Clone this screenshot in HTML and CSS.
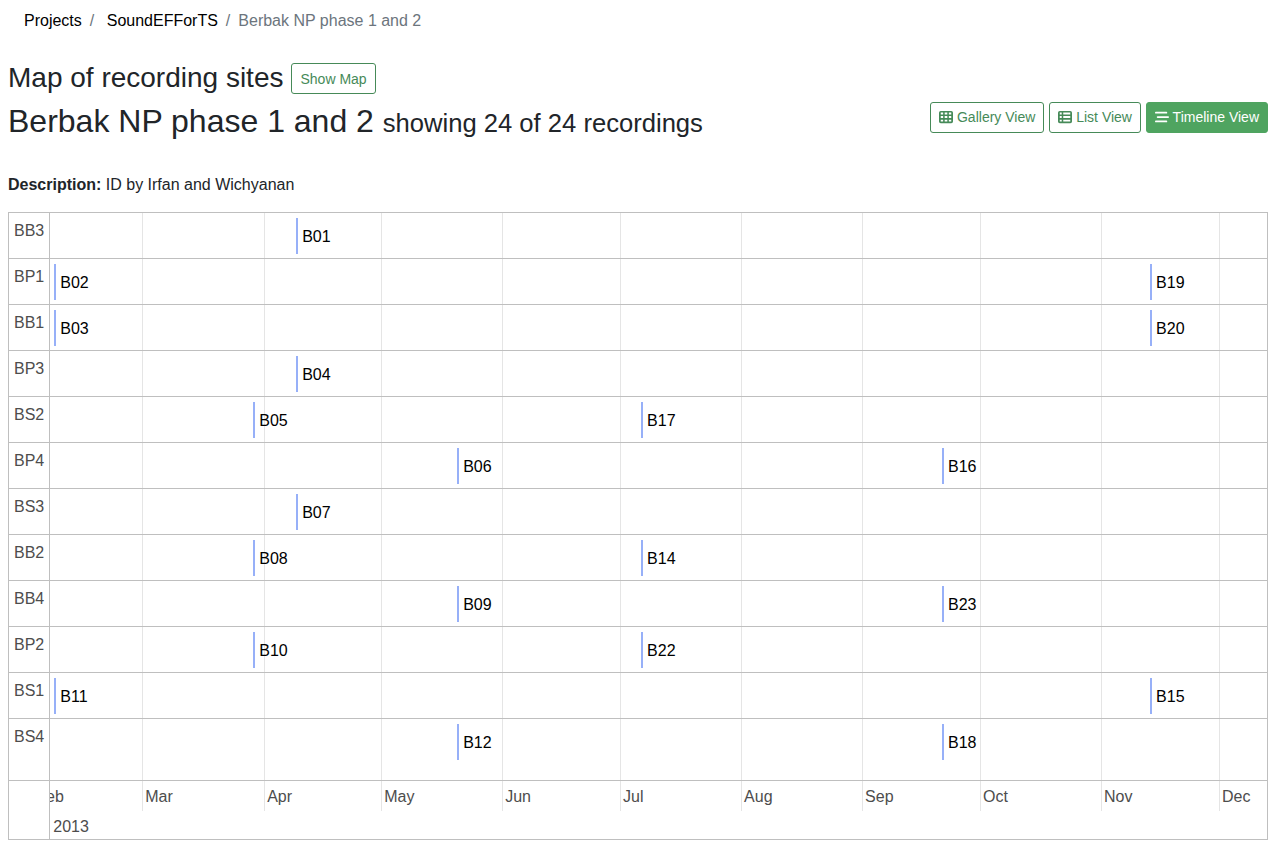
FILE: index.html
```html
<!DOCTYPE html>
<html lang="en">
<head>
<meta charset="utf-8">
<title>Berbak NP phase 1 and 2</title>
<link rel="stylesheet" href="styles.css">
</head>
<body>
<nav aria-label="Breadcrumb">
  <ol class="breadcrumb">
    <li><a href="#">Projects</a></li>
    <li>&nbsp;<a href="#">SoundEFForTS</a></li>
    <li class="current" aria-current="page">Berbak NP phase 1 and 2</li>
  </ol>
</nav>
<main>
  <div class="map-bar">
    <h3>Map of recording sites</h3>
    <button class="btn" type="button">Show Map</button>
  </div>
  <header class="title-bar">
    <h2>Berbak NP phase 1 and 2 <small>showing 24 of 24 recordings</small></h2>
    <div class="views">
      <button class="btn" type="button"><svg class="icon" viewBox="0 0 512 512" aria-hidden="true"><path fill-rule="evenodd" d="M64 32H448a64 64 0 0 1 64 64V416a64 64 0 0 1-64 64H64a64 64 0 0 1-64-64V96A64 64 0 0 1 64 32ZM64 88v72h88V88ZM208 88v72h96V88ZM360 88v72h88V88ZM64 216v80h88v-80ZM208 216v80h96v-80ZM360 216v80h88v-80ZM64 352v72h88v-72ZM208 352v72h96v-72ZM360 352v72h88v-72Z"/></svg> Gallery View</button>
      <button class="btn" type="button"><svg class="icon" viewBox="0 0 512 512" aria-hidden="true"><path fill-rule="evenodd" d="M64 32H448a64 64 0 0 1 64 64V416a64 64 0 0 1-64 64H64a64 64 0 0 1-64-64V96A64 64 0 0 1 64 32ZM64 88v72h72V88ZM192 88v72h256V88ZM64 216v80h72v-80ZM192 216v80h256v-80ZM64 352v72h72v-72ZM192 352v72h256v-72Z"/></svg> List View</button>
      <button class="btn active" type="button" aria-pressed="true"><svg class="icon" viewBox="0 0 512 512" aria-hidden="true"><path d="M32 64H416a32 32 0 0 1 0 64H32a32 32 0 0 1 0-64ZM96 224H480a32 32 0 0 1 0 64H96a32 32 0 0 1 0-64ZM32 384H416a32 32 0 0 1 0 64H32a32 32 0 0 1 0-64Z"/></svg> Timeline View</button>
    </div>
  </header>
  <p class="description"><strong>Description:</strong> ID by Irfan and Wichyanan</p>

  <section class="timeline" aria-label="Recording timeline">
    <div class="sites">
      <div class="site">BB3</div>
      <div class="site">BP1</div>
      <div class="site">BB1</div>
      <div class="site">BP3</div>
      <div class="site">BS2</div>
      <div class="site">BP4</div>
      <div class="site">BS3</div>
      <div class="site">BB2</div>
      <div class="site">BB4</div>
      <div class="site">BP2</div>
      <div class="site">BS1</div>
      <div class="site last">BS4</div>
    </div>
    <div class="plot">
      <div class="months">
        <span>Feb</span><span>Mar</span><span>Apr</span><span>May</span><span>Jun</span><span>Jul</span><span>Aug</span><span>Sep</span><span>Oct</span><span>Nov</span><span>Dec</span>
      </div>
      <div class="tracks">
        <div class="track"><span class="item" style="margin-left:20.21%">B01</span></div>
        <div class="track"><span class="item" style="margin-left:.33%">B02</span><span class="item" style="margin-left:90.39%">B19</span></div>
        <div class="track"><span class="item" style="margin-left:.33%">B03</span><span class="item" style="margin-left:90.39%">B20</span></div>
        <div class="track"><span class="item" style="margin-left:20.21%">B04</span></div>
        <div class="track"><span class="item" style="margin-left:16.68%">B05</span><span class="item" style="margin-left:48.56%">B17</span></div>
        <div class="track"><span class="item" style="margin-left:33.44%">B06</span><span class="item" style="margin-left:73.29%">B16</span></div>
        <div class="track"><span class="item" style="margin-left:20.21%">B07</span></div>
        <div class="track"><span class="item" style="margin-left:16.68%">B08</span><span class="item" style="margin-left:48.56%">B14</span></div>
        <div class="track"><span class="item" style="margin-left:33.44%">B09</span><span class="item" style="margin-left:73.29%">B23</span></div>
        <div class="track"><span class="item" style="margin-left:16.68%">B10</span><span class="item" style="margin-left:48.56%">B22</span></div>
        <div class="track"><span class="item" style="margin-left:.33%">B11</span><span class="item" style="margin-left:90.39%">B15</span></div>
        <div class="track last"><span class="item" style="margin-left:33.44%">B12</span><span class="item" style="margin-left:73.29%">B18</span></div>
        <div class="year">2013</div>
      </div>
    </div>
  </section>
</main>
</body>
</html>
```
FILE: styles.css
```css
* {
  box-sizing: border-box;
}

body {
  margin: 0 9px 0 8px;
  padding-top: 1px;
  background: #fff;
  color: #212529;
  font: 16px/24px "Liberation Sans", Arial, sans-serif;
}

.breadcrumb {
  display: flex;
  flex-wrap: wrap;
  margin: 0 0 19px;
  padding: 8px 16px;
  list-style: none;
}

.breadcrumb a {
  color: #000;
  text-decoration: none;
}

.breadcrumb li + li::before {
  content: "/";
  padding: 0 8px;
  color: #6c757d;
}

.breadcrumb .current {
  color: #6c757d;
}

h2,
h3 {
  margin: 0;
  font-weight: 400;
}

h3 {
  font-size: 28px;
  line-height: 36px;
}

h2 {
  font-size: 32px;
  line-height: 38px;
}

h2 small {
  font-size: 80%;
}

.map-bar {
  display: flex;
  align-items: center;
  gap: 8px;
  margin-bottom: 6px;
}

.title-bar {
  display: flex;
  align-items: flex-start;
  justify-content: space-between;
  margin-bottom: 31px;
}

.views {
  display: flex;
  gap: 5px;
}

.btn {
  padding: 4px 8px;
  border: 1px solid #468a58;
  border-radius: 3px;
  background: transparent;
  color: #468a58;
  font: 14px/21px "Liberation Sans", Arial, sans-serif;
  white-space: nowrap;
}

.map-bar .btn {
  padding: 5px 8px 3px;
}

.btn.active {
  border-color: #4fa460;
  background: #4fa460;
  color: #fff;
}

.icon {
  width: 14px;
  height: 14px;
  fill: currentColor;
  vertical-align: -2px;
}

.description {
  margin: 0 0 15px;
}

.timeline {
  display: grid;
  grid-template-columns: auto 1fr;
  border: 1px solid #bfbfbf;
  color: #4d4d4d;
}

.sites {
  border-right: 1px solid #bfbfbf;
}

.site {
  padding: 6px 5px 15px;
  border-bottom: 1px solid #bfbfbf;
}

.site.last {
  padding-bottom: 31px;
}

/* The month scale and the tracks share one grid cell. */
.plot {
  display: grid;
  grid-template-columns: minmax(0, 1fr);
  overflow: hidden;
}

/* The scale begins on 1 February, just left of the visible range. */
.months {
  display: grid;
  grid-area: 1 / 1;
  grid-template-columns: 109fr 122fr 117fr 121fr 118fr 121fr 121fr 118fr 121fr 118fr 48fr;
  margin-bottom: 28px;
  margin-left: -1.4%;
}

.months span {
  display: flex;
  align-items: flex-end;
  min-width: 0;
  padding: 2px;
  border-left: 1px solid #e5e5e5;
}

.tracks {
  grid-area: 1 / 1;
}

.track {
  display: grid;
  padding: 5px 0 4px;
  border-bottom: 1px solid #bfbfbf;
}

.track.last {
  padding-bottom: 20px;
}

.item {
  grid-area: 1 / 1;
  justify-self: start;
  padding: 7px 4px 5px;
  border-left: 2px solid #97b0f8;
  color: #000;
}

.year {
  padding: 34px 3px 0;
}
```
